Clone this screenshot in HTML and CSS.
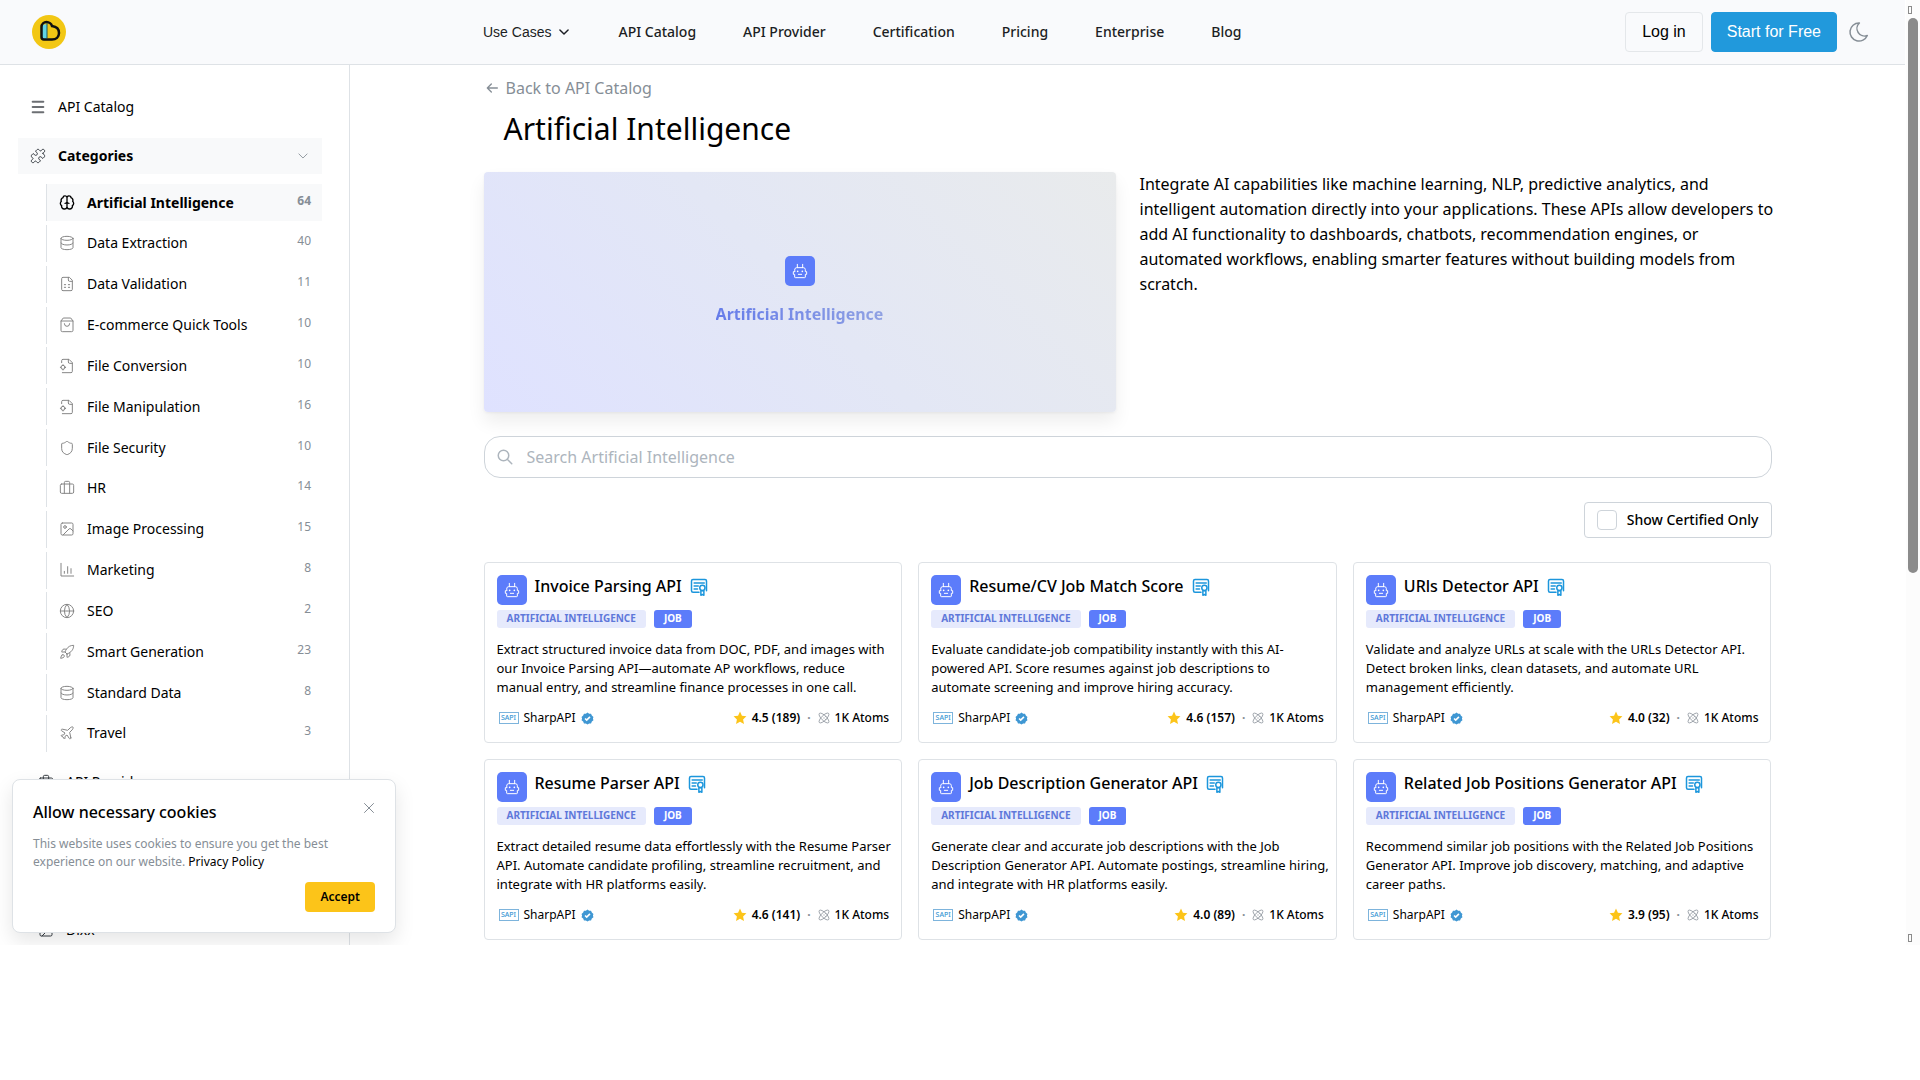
FILE: index.html
```html
<!DOCTYPE html>
<html lang="en">
<head>
<meta charset="utf-8">
<title>Artificial Intelligence - API Catalog</title>
<link rel="stylesheet" href="styles.css">
</head>
<body>
<svg class="sprite" aria-hidden="true">
  <symbol id="i-menu" viewBox="0 0 24 24"><path d="M4 4h16M4 12h16M4 20h16"/></symbol>
  <symbol id="i-puzzle" viewBox="0 0 24 24"><path d="M19.439 7.85c-.049.322.059.648.289.878l1.568 1.568c.47.47.706 1.087.706 1.704s-.235 1.233-.706 1.704l-1.611 1.611a.98.98 0 0 1-.837.276c-.47-.07-.802-.48-.968-.925a2.501 2.501 0 1 0-3.214 3.214c.446.166.855.497.925.968a.979.979 0 0 1-.276.837l-1.61 1.61a2.404 2.404 0 0 1-1.705.707 2.402 2.402 0 0 1-1.704-.706l-1.568-1.568a1.026 1.026 0 0 0-.877-.29c-.493.074-.84.504-1.02.968a2.5 2.5 0 1 1-3.237-3.237c.464-.18.894-.527.967-1.02a1.026 1.026 0 0 0-.289-.877l-1.568-1.568A2.402 2.402 0 0 1 1.998 12c0-.617.236-1.234.706-1.704L4.23 8.77c.24-.24.581-.353.917-.303.515.077.877.528 1.073 1.01a2.5 2.5 0 1 0 3.259-3.259c-.482-.196-.933-.558-1.01-1.073-.05-.336.062-.676.303-.917l1.525-1.525A2.402 2.402 0 0 1 12 1.998c.617 0 1.234.236 1.704.706l1.568 1.568c.23.23.556.338.877.29.493-.074.84-.504 1.02-.968a2.5 2.5 0 1 1 3.237 3.237c-.464.18-.894.527-.967 1.02Z"/></symbol>
  <symbol id="i-chevron" viewBox="0 0 24 24"><path d="m5 8.500 7 7 7-7"/></symbol>
  <symbol id="i-brain" viewBox="0 0 24 24"><path d="M12 4.500v15M12 4.500a3 3 0 0 0-6-.500 4 4 0 0 0-2.500 5.500 4 4 0 0 0 .500 6.500A4 4 0 0 0 8 21a4 4 0 0 0 4-3M12 4.500a3 3 0 0 1 6-.500 4 4 0 0 1 2.500 5.500 4 4 0 0 1-.500 6.500A4 4 0 0 1 16 21a4 4 0 0 1-4-3M9 12.500c1.500 0 2.500-.800 3-2 .500 1.200 1.500 2 3 2"/></symbol>
  <symbol id="i-db" viewBox="0 0 24 24"><ellipse cx="12" cy="5" rx="9" ry="3"/><path d="M3 5v14a9 3 0 0 0 18 0V5M3 12a9 3 0 0 0 18 0"/></symbol>
  <symbol id="i-file" viewBox="0 0 24 24"><path d="M15 2H6a2 2 0 0 0-2 2v16a2 2 0 0 0 2 2h12a2 2 0 0 0 2-2V7ZM14 2v4a2 2 0 0 0 2 2h4M8 13h2M14 13h2M8 17h2M14 17h2"/></symbol>
  <symbol id="i-bag" viewBox="0 0 24 24"><path d="M6 2 3 6v14a2 2 0 0 0 2 2h14a2 2 0 0 0 2-2V6l-3-4ZM3 6h18M16 10a4 4 0 0 1-8 0"/></symbol>
  <symbol id="i-filecog" viewBox="0 0 24 24"><path d="M14 2v4a2 2 0 0 0 2 2h4M4 7V4a2 2 0 0 1 2-2h9l5 5v13a2 2 0 0 1-2 2H5M6 10v1M6 17v1M2 14h1M9 14h1"/><circle cx="6" cy="14" r="3"/></symbol>
  <symbol id="i-shield" viewBox="0 0 24 24"><path d="M20 13c0 5-3.500 7.500-7.660 8.950a1 1 0 0 1-.670-.010C7.500 20.500 4 18 4 13V6a1 1 0 0 1 1-1c2 0 4.500-1.200 6.240-2.720a1.170 1.170 0 0 1 1.520 0C14.510 3.810 17 5 19 5a1 1 0 0 1 1 1z"/></symbol>
  <symbol id="i-case" viewBox="0 0 24 24"><path d="M16 20V4a2 2 0 0 0-2-2h-4a2 2 0 0 0-2 2v16"/><rect width="20" height="14" x="2" y="6" rx="2"/></symbol>
  <symbol id="i-image" viewBox="0 0 24 24"><rect width="18" height="18" x="3" y="3" rx="2"/><circle cx="9" cy="9" r="2"/><path d="m21 15-3.086-3.086a2 2 0 0 0-2.828 0L6 21"/></symbol>
  <symbol id="i-chart" viewBox="0 0 24 24"><path d="M3 2v19h19M8 17v-3M13 17V7M18 17v-7"/></symbol>
  <symbol id="i-globe" viewBox="0 0 24 24"><circle cx="12" cy="12" r="10"/><path d="M12 2a14.500 14.500 0 0 0 0 20 14.500 14.500 0 0 0 0-20M2 12h20"/></symbol>
  <symbol id="i-rocket" viewBox="0 0 24 24"><path d="M4.500 16.500c-1.500 1.260-2 5-2 5s3.740-.500 5-2c.710-.840.700-2.130-.090-2.910a2.180 2.180 0 0 0-2.910-.090zM12 15l-3-3a22 22 0 0 1 2-3.950A12.880 12.880 0 0 1 22 2c0 2.720-.780 7.500-6 11a22.350 22.350 0 0 1-4 2zM9 12H4s.550-3.030 2-4c1.620-1.080 5 0 5 0M12 15v5s3.030-.550 4-2c1.080-1.620 0-5 0-5"/></symbol>
  <symbol id="i-plane" viewBox="0 0 24 24"><path d="M17.800 19.200 16 11l3.500-3.500C21 6 21.500 4 21 3c-1-.500-3 0-4.500 1.500L13 8 4.800 6.200c-.500-.100-.900.100-1.100.500l-.300.500c-.200.500-.100 1 .300 1.300L9 12l-2 3H4l-1 1 3 2 2 3 1-1v-3l3-2 3.500 5.300c.300.400.800.500 1.300.300l.500-.200c.400-.300.600-.700.500-1.200z"/></symbol>
  <symbol id="i-arrow" viewBox="0 0 24 24"><path d="M20 12H5M11 6l-6 6 6 6"/></symbol>
  <symbol id="i-search" viewBox="0 0 24 24"><circle cx="10" cy="10" r="7"/><path d="m21 21-6-6"/></symbol>
  <symbol id="i-close" viewBox="0 0 24 24"><path d="M3 3l18 18M21 3 3 21"/></symbol>
  <symbol id="i-moon" viewBox="0 0 24 24"><path d="M12 3h.393a7.500 7.500 0 0 0 7.920 12.446A9 9 0 1 1 12 2.992z"/></symbol>
  <symbol id="i-robot" viewBox="0 0 24 24"><path d="M8 7V2M16 7V2M4 10a3 3 0 0 1 3-3h10a3 3 0 0 1 3 3v3h2v4h-2v4a1 1 0 0 1-1 1H5a1 1 0 0 1-1-1v-4H2v-4h2zM9.500 17h5"/><path class="dots" d="M8.500 12.500v.200M15.500 12.500v.200"/></symbol>
  <symbol id="i-cert" viewBox="0 0 24 24"><path d="M12 19H4a2 2 0 0 1-2-2V4a2 2 0 0 1 2-2h16a2 2 0 0 1 2 2v13M5.500 6.500H19M5.500 10.500H11M5.500 14.500H10"/><circle cx="16.500" cy="13" r="3.500"/><path d="M14.500 17v6l2-1 2 1v-6z"/></symbol>
  <symbol id="i-verified" viewBox="0 0 24 24"><path class="seal" d="M12 1l3 2 3.500 0 1.500 3.500L23 9l-1 3 1 3-3 2.500-1.500 3.500H15l-3 2-3-2H5.500L4 17.500 1 15l1-3-1-3 3-2.500L5.500 3H9z"/><path class="tick" d="m7.500 12 3 3 6-6"/></symbol>
  <symbol id="i-star" viewBox="0 0 24 24"><path d="m12 1 3.300 7.200 7.700.900-5.700 5.300 1.500 7.700-6.800-3.800-6.800 3.800 1.500-7.700L1 9.100l7.700-.900z"/></symbol>
  <symbol id="i-atom" viewBox="0 0 24 24"><ellipse cx="12" cy="12" rx="5" ry="13" transform="rotate(45 12 12)"/><ellipse cx="12" cy="12" rx="5" ry="13" transform="rotate(-45 12 12)"/><path d="M12 11.500v1"/></symbol>
</svg>

<div class="shell">
  <header class="topbar">
    <a class="logo" href="#" aria-label="Home">
      <svg viewBox="0 0 34 34"><circle cx="17" cy="17" r="17" fill="#f2c714"/><path d="M10 9.500h5V24h-5.500z" fill="#62d4e4"/><path d="M9.500 12c0-3 2.500-5 5-5s5 2 5.500 4c4 .500 7 3 7 7 0 4-3 6.500-7 6.500h-8a2.500 2.500 0 0 1-2.500-2.500z" fill="none" stroke="#111" stroke-width="2.500"/><path d="M15 8v15" stroke="#1a5a60"/></svg>
    </a>
    <nav class="nav" aria-label="Main">
      <button type="button" class="navbtn">Use Cases <svg class="ico"><use href="#i-chevron"/></svg></button>
      <a href="#">API Catalog</a>
      <a href="#">API Provider</a>
      <a href="#">Certification</a>
      <a href="#">Pricing</a>
      <a href="#">Enterprise</a>
      <a href="#">Blog</a>
    </nav>
    <div class="actions">
      <button type="button" class="btn">Log in</button>
      <button type="button" class="btn primary">Start for Free</button>
      <button type="button" class="theme" aria-label="Toggle theme"><svg class="ico"><use href="#i-moon"/></svg></button>
    </div>
  </header>

  <div class="body">
    <aside class="sidebar">
      <a class="side-link" href="#"><svg class="ico thick"><use href="#i-menu"/></svg>API Catalog</a>
      <a class="side-link open" href="#"><svg class="ico"><use href="#i-puzzle"/></svg>Categories<svg class="ico caret"><use href="#i-chevron"/></svg></a>
      <ul class="cats">
        <li><a class="active" href="#"><svg class="ico"><use href="#i-brain"/></svg>Artificial Intelligence<span>64</span></a></li>
        <li><a href="#"><svg class="ico"><use href="#i-db"/></svg>Data Extraction<span>40</span></a></li>
        <li><a href="#"><svg class="ico"><use href="#i-file"/></svg>Data Validation<span>11</span></a></li>
        <li><a href="#"><svg class="ico"><use href="#i-bag"/></svg>E-commerce Quick Tools<span>10</span></a></li>
        <li><a href="#"><svg class="ico"><use href="#i-filecog"/></svg>File Conversion<span>10</span></a></li>
        <li><a href="#"><svg class="ico"><use href="#i-filecog"/></svg>File Manipulation<span>16</span></a></li>
        <li><a href="#"><svg class="ico"><use href="#i-shield"/></svg>File Security<span>10</span></a></li>
        <li><a href="#"><svg class="ico"><use href="#i-case"/></svg>HR<span>14</span></a></li>
        <li><a href="#"><svg class="ico"><use href="#i-image"/></svg>Image Processing<span>15</span></a></li>
        <li><a href="#"><svg class="ico"><use href="#i-chart"/></svg>Marketing<span>8</span></a></li>
        <li><a href="#"><svg class="ico"><use href="#i-globe"/></svg>SEO<span>2</span></a></li>
        <li><a href="#"><svg class="ico"><use href="#i-rocket"/></svg>Smart Generation<span>23</span></a></li>
        <li><a href="#"><svg class="ico"><use href="#i-db"/></svg>Standard Data<span>8</span></a></li>
        <li><a href="#"><svg class="ico"><use href="#i-plane"/></svg>Travel<span>3</span></a></li>
      </ul>
      <div class="more">
        <a class="side-link" href="#"><svg class="ico"><use href="#i-case"/></svg>API Provider</a>
        <a class="side-link" href="#"><svg class="ico"><use href="#i-image"/></svg>Dixx</a>
      </div>
    </aside>

    <main class="main">
      <div class="content">
        <a class="back" href="#"><svg class="ico"><use href="#i-arrow"/></svg>Back to API Catalog</a>
        <h1>Artificial Intelligence</h1>
        <section class="intro">
          <div class="hero">
            <span class="bot"><svg class="ico"><use href="#i-robot"/></svg></span>
            <strong>Artificial Intelligence</strong>
          </div>
          <p>Integrate AI capabilities like machine learning, NLP, predictive analytics, and intelligent automation directly into your applications. These APIs allow developers to add AI functionality to dashboards, chatbots, recommendation engines, or automated workflows, enabling smarter features without building models from scratch.</p>
        </section>
        <div class="search">
          <svg class="ico"><use href="#i-search"/></svg>
          <input type="search" aria-label="Search Artificial Intelligence" placeholder="Search Artificial Intelligence">
        </div>
        <label class="certified"><input type="checkbox">Show Certified Only</label>

        <section class="cards">
          <article class="card">
            <header><span class="bot"><svg class="ico"><use href="#i-robot"/></svg></span><h2>Invoice Parsing API</h2><svg class="ico cert"><use href="#i-cert"/></svg></header>
            <div class="badges"><span class="badge">ARTIFICIAL INTELLIGENCE</span><span class="badge solid">JOB</span></div>
            <p>Extract structured invoice data from DOC, PDF, and images with our Invoice Parsing API—automate AP workflows, reduce manual&nbsp;entry, and streamline finance processes in one call.</p>
            <footer><span class="sapi">SAPI</span><span class="vendor">SharpAPI</span><svg class="verified"><use href="#i-verified"/></svg><svg class="star"><use href="#i-star"/></svg><b>4.5 (189)</b><i>·</i><svg class="ico atom"><use href="#i-atom"/></svg><span class="price">1K Atoms</span></footer>
          </article>
          <article class="card">
            <header><span class="bot"><svg class="ico"><use href="#i-robot"/></svg></span><h2>Resume/CV Job Match Score</h2><svg class="ico cert"><use href="#i-cert"/></svg></header>
            <div class="badges"><span class="badge">ARTIFICIAL INTELLIGENCE</span><span class="badge solid">JOB</span></div>
            <p>Evaluate candidate-job compatibility instantly with this AI-powered API. Score resumes against job descriptions to automate screening and improve hiring accuracy.</p>
            <footer><span class="sapi">SAPI</span><span class="vendor">SharpAPI</span><svg class="verified"><use href="#i-verified"/></svg><svg class="star"><use href="#i-star"/></svg><b>4.6 (157)</b><i>·</i><svg class="ico atom"><use href="#i-atom"/></svg><span class="price">1K Atoms</span></footer>
          </article>
          <article class="card">
            <header><span class="bot"><svg class="ico"><use href="#i-robot"/></svg></span><h2>URls Detector API</h2><svg class="ico cert"><use href="#i-cert"/></svg></header>
            <div class="badges"><span class="badge">ARTIFICIAL INTELLIGENCE</span><span class="badge solid">JOB</span></div>
            <p>Validate and analyze URLs at scale with the URLs Detector API. Detect broken links, clean datasets, and automate URL management efficiently.</p>
            <footer><span class="sapi">SAPI</span><span class="vendor">SharpAPI</span><svg class="verified"><use href="#i-verified"/></svg><svg class="star"><use href="#i-star"/></svg><b>4.0 (32)</b><i>·</i><svg class="ico atom"><use href="#i-atom"/></svg><span class="price">1K Atoms</span></footer>
          </article>
          <article class="card">
            <header><span class="bot"><svg class="ico"><use href="#i-robot"/></svg></span><h2>Resume Parser API</h2><svg class="ico cert"><use href="#i-cert"/></svg></header>
            <div class="badges"><span class="badge">ARTIFICIAL INTELLIGENCE</span><span class="badge solid">JOB</span></div>
            <p>Extract detailed resume data effortlessly with the Resume Parser API. Automate candidate profiling, streamline recruitment, and integrate with HR platforms easily.</p>
            <footer><span class="sapi">SAPI</span><span class="vendor">SharpAPI</span><svg class="verified"><use href="#i-verified"/></svg><svg class="star"><use href="#i-star"/></svg><b>4.6 (141)</b><i>·</i><svg class="ico atom"><use href="#i-atom"/></svg><span class="price">1K Atoms</span></footer>
          </article>
          <article class="card">
            <header><span class="bot"><svg class="ico"><use href="#i-robot"/></svg></span><h2>Job Description Generator API</h2><svg class="ico cert"><use href="#i-cert"/></svg></header>
            <div class="badges"><span class="badge">ARTIFICIAL INTELLIGENCE</span><span class="badge solid">JOB</span></div>
            <p>Generate clear and accurate job descriptions with the Job Description Generator API. Automate postings, streamline hiring, and integrate with HR platforms easily.</p>
            <footer><span class="sapi">SAPI</span><span class="vendor">SharpAPI</span><svg class="verified"><use href="#i-verified"/></svg><svg class="star"><use href="#i-star"/></svg><b>4.0 (89)</b><i>·</i><svg class="ico atom"><use href="#i-atom"/></svg><span class="price">1K Atoms</span></footer>
          </article>
          <article class="card">
            <header><span class="bot"><svg class="ico"><use href="#i-robot"/></svg></span><h2>Related Job Positions Generator API</h2><svg class="ico cert"><use href="#i-cert"/></svg></header>
            <div class="badges"><span class="badge">ARTIFICIAL INTELLIGENCE</span><span class="badge solid">JOB</span></div>
            <p>Recommend similar job positions with the Related Job Positions Generator API. Improve job discovery, matching, and adaptive career paths.</p>
            <footer><span class="sapi">SAPI</span><span class="vendor">SharpAPI</span><svg class="verified"><use href="#i-verified"/></svg><svg class="star"><use href="#i-star"/></svg><b>3.9 (95)</b><i>·</i><svg class="ico atom"><use href="#i-atom"/></svg><span class="price">1K Atoms</span></footer>
          </article>
        </section>
      </div>
    </main>
  </div>

  <div class="scrollbar" aria-hidden="true"><span class="end"></span><span class="thumb"></span><span class="end"></span></div>

  <section class="cookies" aria-label="Cookies">
    <div class="cookies-head"><h2>Allow necessary cookies</h2><button type="button" class="close" aria-label="Close"><svg class="ico"><use href="#i-close"/></svg></button></div>
    <p>This website uses cookies to ensure you get the best experience on our website. <a href="#">Privacy Policy</a></p>
    <button type="button" class="accept">Accept</button>
  </section>
</div>
</body>
</html>
```
FILE: styles.css
```css
* { box-sizing: border-box; }
body {
  margin: 0;
  background: #fff;
  color: #000;
  font: 14px/22px "Noto Sans", sans-serif;
}
a { color: inherit; text-decoration: none; }
button { border: 0; padding: 0; background: none; color: inherit; font: inherit; }
h1, h2, p, ul { margin: 0; padding: 0; }
ul { list-style: none; }

.sprite { position: absolute; width: 0; height: 0; }
.ico {
  width: 16px;
  height: 16px;
  flex: none;
  fill: none;
  stroke: currentColor;
  stroke-width: 1.5;
  stroke-linecap: round;
  stroke-linejoin: round;
}
.thick { stroke-width: 3; }

.shell {
  position: relative;
  height: 87.5vh;
  padding-right: 15px;
  overflow: hidden;
}

/* Top bar */
.topbar {
  display: flex;
  align-items: center;
  height: 65px;
  padding: 0 32px;
  background: #f9fafc;
  border-bottom: 1px solid #dee2e6;
}
.logo, .logo svg { display: block; width: 34px; height: 34px; }
.nav {
  display: flex;
  gap: 47px;
  margin-left: 417px;
  color: #1c1e24;
  font-weight: 500;
  white-space: nowrap;
}
.navbtn {
  display: flex;
  align-items: center;
  gap: 6px;
  font: 14px/22px "Liberation Sans", sans-serif;
}
.navbtn .ico { width: 14px; height: 14px; stroke-width: 2.5; }
.actions { display: flex; align-items: center; gap: 8px; margin-left: auto; }
.btn {
  height: 40px;
  padding: 0 16px;
  border: 1px solid #e4e7ea;
  border-radius: 4px;
  font: 16px/24px "Liberation Sans", sans-serif;
  white-space: nowrap;
}
.btn.primary { padding: 0 15px; background: #2199dc; border-color: #2199dc; color: #fff; }
.theme { display: flex; padding: 2px; color: #868e96; }
.theme .ico { width: 24px; height: 24px; }

.body { display: flex; height: 100%; }

/* Sidebar */
.sidebar {
  flex: none;
  width: 350px;
  padding: 24px 27px 0 18px;
  border-right: 1px solid #dee2e6;
}
.side-link {
  display: flex;
  align-items: center;
  gap: 12px;
  height: 36px;
  padding: 0 12px;
}
.side-link > .ico:first-child { color: #343a40; }
.side-link > .thick:first-child { color: #6c6f73; }
.side-link.open { margin-top: 13px; background: #f8f9fa; font-weight: 700; }
.side-link .caret { margin-left: auto; width: 14px; height: 14px; color: #868e96; }
.cats {
  display: flex;
  flex-direction: column;
  justify-content: space-between;
  min-height: 568px;
  margin: 10px 0 0 28px;
}
.cats a {
  display: flex;
  align-items: center;
  gap: 12px;
  height: 37px;
  padding: 0 11px 0 12px;
  border-left: 1px solid #dee2e6;
}
.cats .ico { color: #868686; stroke-width: 1.5; }
.cats span { margin: 0 0 4px auto; color: #868e96; font-size: 12px; line-height: 18px; }
.cats .active { background: #f8f9fa; font-weight: 700; }
.cats .active .ico { color: #000; stroke-width: 2; }
.more {
  display: flex;
  flex-direction: column;
  justify-content: space-between;
  height: 184px;
  margin-top: 12px;
  padding-left: 8px;
}

/* Main column */
.main { flex: 1; min-width: 0; padding: 11px 16px 0; }
.content { max-width: 1288px; margin: 0 auto; }
.back {
  display: flex;
  align-items: center;
  gap: 6px;
  color: #868e96;
  font-size: 16px;
  line-height: 24px;
}
.back .ico { stroke-width: 2; }
h1 { margin: 8px 0 0 20px; font-size: 30px; font-weight: 400; line-height: 42px; }
.intro { display: grid; grid-template-columns: 1fr 1fr; gap: 24px; margin-top: 22px; }
.intro p { margin-right: -8px; font-size: 16px; line-height: 25px; }
.hero {
  display: flex;
  flex-direction: column;
  align-items: center;
  justify-content: center;
  gap: 16px;
  height: 240px;
  padding-bottom: 2px;
  border-radius: 4px;
  background: linear-gradient(45deg, #dfe2ff, #e3e7f5 50%, #e9ebec);
  box-shadow: 0 10px 18px rgba(0, 0, 0, .07), 0 1px 3px rgba(0, 0, 0, .05);
}
.hero strong {
  background: linear-gradient(45deg, #6279ea, #93a4e2);
  background-clip: text;
  color: transparent;
  font-size: 16px;
  line-height: 24px;
}
.bot {
  display: grid;
  place-items: center;
  flex: none;
  width: 30px;
  height: 30px;
  border-radius: 5px;
  background: #5c7cfa;
  color: #fff;
}
.dots { stroke-width: 2.5; }

.search {
  display: flex;
  align-items: center;
  gap: 13px;
  height: 42px;
  margin-top: 24px;
  padding: 0 11px;
  border: 1px solid #ced4da;
  border-radius: 16px;
}
.search .ico { width: 18px; height: 18px; color: #adb5bd; stroke-width: 2; }
.search input {
  flex: 1;
  border: 0;
  padding: 0;
  background: none;
  font: 16px/24px "Noto Sans", sans-serif;
}
.search input::placeholder { color: #adb5bd; opacity: 1; }
.certified {
  display: flex;
  align-items: center;
  gap: 10px;
  width: fit-content;
  height: 36px;
  margin: 24px 0 24px auto;
  padding: 0 12px;
  border: 1px solid #ced4da;
  border-radius: 4px;
  font-weight: 500;
}
.certified input {
  appearance: none;
  width: 20px;
  height: 20px;
  margin: 0;
  border: 1px solid #ced4da;
  border-radius: 4px;
}

/* API cards */
.cards { display: grid; grid-template-columns: repeat(3, 1fr); gap: 16px; }
.card {
  display: flex;
  flex-direction: column;
  height: 181px;
  padding: 12px;
  border: 1px solid #dee2e6;
  border-radius: 4px;
}
.card header { display: flex; gap: 8px; }
.card h2 { font-size: 16px; font-weight: 500; line-height: 22px; }
.cert { width: 18px; height: 18px; margin-top: 3px; color: #1c96dc; stroke-width: 2; }
.badges { display: flex; gap: 8px; margin-top: 5px; }
.badge {
  height: 18px;
  padding: 0 10px;
  border-radius: 3px;
  background: #e6eafc;
  color: #5f78da;
  font-size: 10px;
  font-weight: 700;
  line-height: 17px;
  white-space: nowrap;
}
.badge.solid { background: #5c7cfa; color: #fff; }
.card p { margin: 12px -8px 0 0; font-size: 13px; line-height: 19px; }
.card footer {
  display: flex;
  align-items: center;
  gap: 5px;
  margin-top: 12px;
  padding-left: 2px;
  font-size: 12px;
  font-weight: 500;
  line-height: 18px;
}
.sapi {
  width: 20px;
  border: 1px solid #7db4dc;
  color: #3b98d4;
  font-size: 7px;
  line-height: 10px;
  text-align: center;
}
.vendor { font-weight: 400; }
.verified { width: 13px; height: 13px; }
.seal { fill: #3f97d3; }
.tick { fill: none; stroke: #fff; stroke-width: 3; }
.star { width: 14px; height: 14px; margin-left: auto; fill: #fcc419; }
.card footer b { font-weight: 600; }
.card footer i { margin: 0 2px; color: #868e96; font-style: normal; font-weight: 700; }
.atom { width: 12px; height: 12px; color: #868e96; overflow: visible; }

/* Page scrollbar */
.scrollbar {
  position: absolute;
  inset: 0 0 0 auto;
  display: flex;
  flex-direction: column;
  width: 14px;
  padding: 6px 2px 3px;
  background: #fcfcfc;
}
.thumb { height: 555px; margin: 4px 0 auto; border-radius: 5px; background: #8b8b8b; }
.end { width: 4px; height: 8px; border: 1px solid #8b8b8b; }

/* Cookie notice */
.cookies {
  position: absolute;
  left: 12px;
  bottom: 12px;
  display: flex;
  flex-direction: column;
  width: 384px;
  padding: 19px 20px 20px;
  border: 1px solid #dee2e6;
  border-radius: 8px;
  background: #fff;
  box-shadow: 0 8px 20px rgba(0, 0, 0, .1);
}
.cookies-head { display: flex; align-items: flex-start; justify-content: space-between; }
.cookies h2 { font-size: 16px; font-weight: 500; line-height: 26px; }
.close { display: flex; padding: 3px 0; color: #868e96; }
.close .ico { width: 12px; height: 12px; stroke-width: 2; }
.cookies p { margin-top: 10px; color: #868e96; font-size: 12px; line-height: 18px; }
.cookies p a { color: #000; }
.accept {
  align-self: flex-end;
  height: 30px;
  margin-top: 11px;
  padding: 0 15px;
  border-radius: 4px;
  background: #fcc419;
  font-size: 12px;
  font-weight: 600;
  line-height: 30px;
}
```
